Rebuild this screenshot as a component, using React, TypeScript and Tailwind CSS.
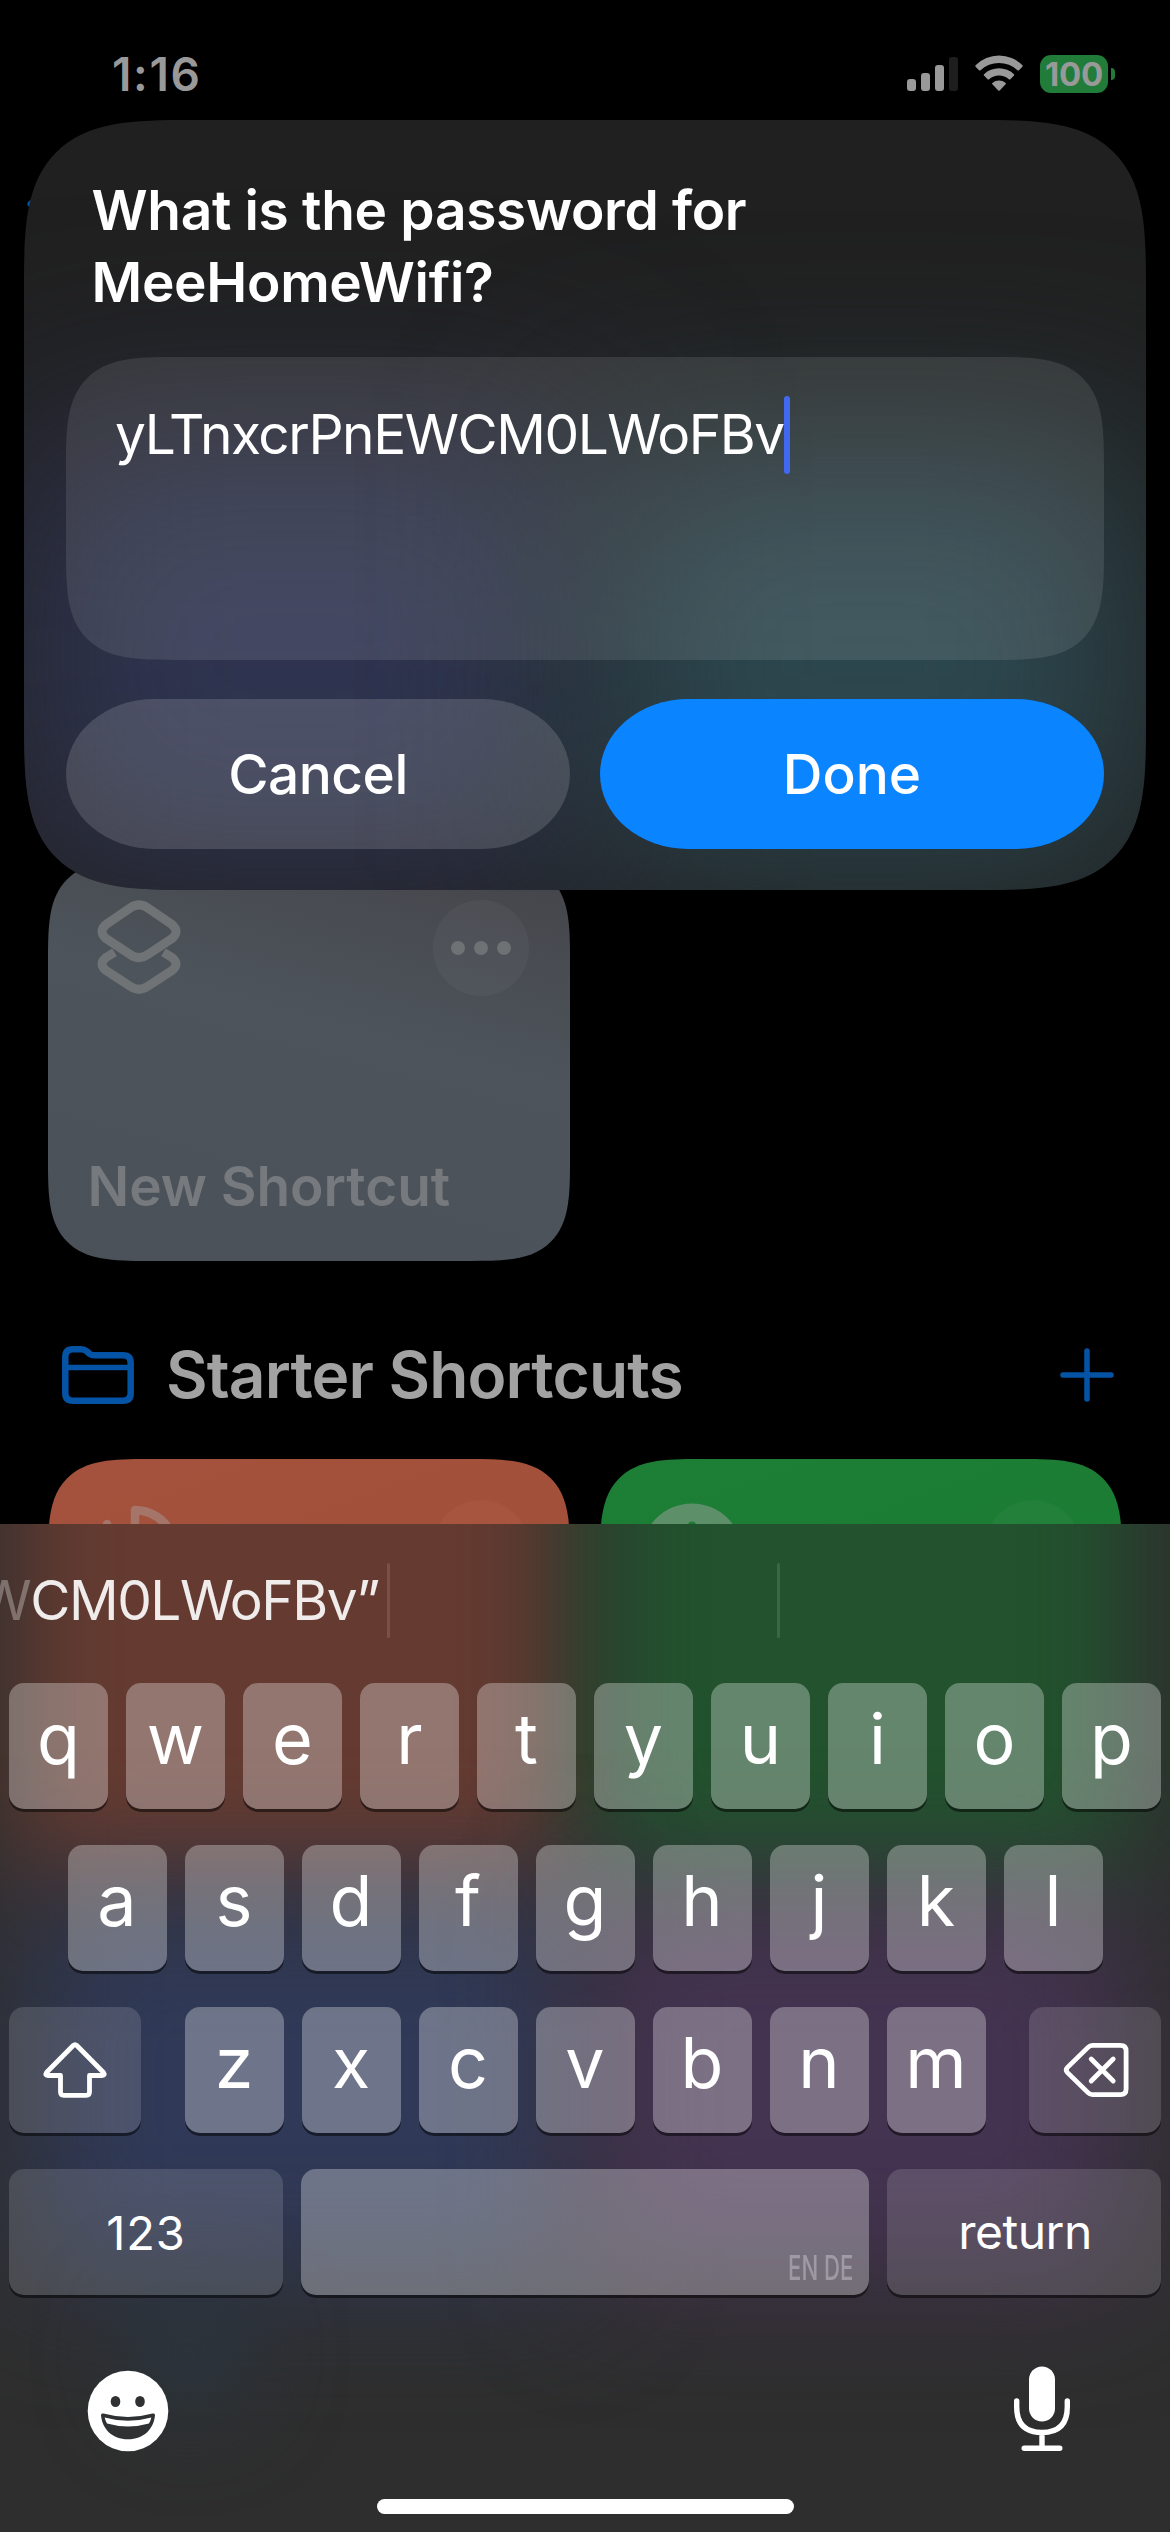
import type { ReactNode } from "react";

function SignalIcon() {
  return (
    <div className="flex h-[34px] items-end gap-[5px]">
      <div className="h-3 w-[9px] rounded-[3px] bg-[#999]" />
      <div className="h-[18px] w-[9px] rounded-[3px] bg-[#999]" />
      <div className="h-[26px] w-[9px] rounded-[3px] bg-[#999]" />
      <div className="h-[34px] w-[9px] rounded-[3px] bg-[#1e1e1e]" />
    </div>
  );
}

function WifiIcon() {
  return (
    <svg width="48" height="36" viewBox="0 0 48 36" fill="#999" className="-mt-0.5">
      <path d="M0.6 10.2A33 33 0 0 1 47.4 10.2Q48 11 47.4 11.7L44 15.2Q43.2 15.8 42.4 15.2A27 27 0 0 0 5.6 15.2Q4.8 15.8 4 15.2L0.6 11.7Q0 11 0.6 10.2Z" />
      <path d="M9 19.2A22 22 0 0 1 39 19.2Q39.7 19.9 39 20.6L35.4 24.2Q34.6 24.8 33.8 24.2A15 15 0 0 0 14.2 24.2Q13.4 24.8 12.6 24.2L9 20.6Q8.3 19.9 9 19.2Z" />
      <path d="M17.4 28A10 10 0 0 1 30.6 28Q31.3 28.6 30.6 29.3L24.7 35.5Q24 36.1 23.3 35.5L17.4 29.3Q16.7 28.6 17.4 28Z" />
    </svg>
  );
}

function StatusBar() {
  return (
    <div className="flex h-[148px] items-center pl-28 pr-[55px]">
      <span className="text-[46px] font-semibold leading-none tracking-[1.64px] text-[#999]">1:16</span>
      <div className="ml-auto flex items-center">
        <SignalIcon />
        <div className="ml-[17px]">
          <WifiIcon />
        </div>
        <div className="ml-[17px] flex h-[38px] w-[68px] items-center justify-center rounded-[11px] bg-[#207c38] text-[33px] font-bold leading-none tracking-[-0.24px] text-[#999]">
          100
        </div>
        <div className="ml-[3px] h-3 w-1 rounded-r-full bg-[#207c38]" />
      </div>
    </div>
  );
}

function ShortcutsIcon() {
  return (
    <svg width="84" height="96" viewBox="0 0 84 96" fill="none" stroke="#6f7376" strokeWidth="9" strokeLinejoin="round">
      <path d="M17.500 52.200L9 57.500Q1 64 9 70.500L33.500 86.400Q42 92.200 50.500 86.400L75 70.500Q83 64 75 57.500L66.500 52.200" />
      <path d="M33.500 7.800Q42 2 50.500 7.800L75 24.500Q83 31.500 75 38.500L50.500 54.700Q42 60.500 33.500 54.700L9 38.500Q1 31.500 9 24.500Z" />
    </svg>
  );
}

function MoreButton({ className, children }: { className: string; children?: ReactNode }) {
  return <div className={`flex size-24 items-center justify-center gap-[9px] rounded-full ${className}`}>{children}</div>;
}

function FolderIcon() {
  return (
    <svg width="72" height="58" viewBox="0 0 72 58" fill="none" stroke="#0453a5" strokeWidth="6.500" strokeLinejoin="round">
      <path d="M3.300 11Q3.300 3.300 11 3.300H19Q22.500 3.300 25 5.500L27.500 7.700Q29.500 9.300 32.500 9.300H61Q68.700 9.300 68.700 17V47Q68.700 54.700 61 54.700H11Q3.300 54.700 3.300 47Z" />
      <path d="M3.300 21.500H68.700" strokeWidth="5.500" />
    </svg>
  );
}

function Home() {
  return (
    <div className="flex h-full flex-col">
      <StatusBar />
      <div className="h-[712px] pl-[27px] pt-9">
        <svg width="26" height="40" viewBox="0 0 26 40" fill="none" stroke="#0453a5" strokeWidth="7" strokeLinecap="round" strokeLinejoin="round">
          <path d="M21 4L4 20L21 36" />
        </svg>
      </div>
      <div className="ml-12 flex h-[401px] w-[522px] flex-col justify-between rounded-[100px] bg-[linear-gradient(195deg,#46474d_8%,#4d545b_42%,#4a5158)] pb-[41px] pl-[39.5px] pr-[41px] pt-10 [corner-shape:superellipse(1.7)]">
        <div className="flex justify-between pl-[9px]">
          <ShortcutsIcon />
          <MoreButton className="bg-white/[0.035]">
            <div className="size-[14px] rounded-full bg-[#6e7274]" />
            <div className="size-[14px] rounded-full bg-[#6e7274]" />
            <div className="size-[14px] rounded-full bg-[#6e7274]" />
          </MoreButton>
        </div>
        <p className="text-[55px] font-semibold leading-[68px] tracking-[-0.05px] text-[#76797d]">New Shortcut</p>
      </div>
      <div className="flex h-[198px] items-center pl-[62px] pr-14 pt-[30px]">
        <FolderIcon />
        <h2 className="ml-8 text-[64px] font-semibold leading-none tracking-[-0.85px] text-[#a2a2a2]">Starter Shortcuts</h2>
        <svg className="ml-auto" width="54" height="54" viewBox="0 0 54 54" stroke="#0453a5" strokeWidth="5.500" strokeLinecap="round">
          <path d="M27 3V51M3 27H51" />
        </svg>
      </div>
      <div className="flex gap-[30px] px-12">
        <div className="flex h-[400px] w-[522px] items-start justify-between rounded-[100px] bg-[linear-gradient(160deg,#a4523d,#a14d37)] pl-[49px] pr-[41px] pt-[41px] [corner-shape:superellipse(1.7)]">
          <svg width="84" height="96" viewBox="0 0 84 96" fill="none" stroke="#a5756a" strokeWidth="8.500" strokeLinecap="round" strokeLinejoin="round" className="mt-[5px]">
            <path d="M38 44V5Q68 6 80 40" />
            <path d="M10 19L5 40" />
          </svg>
          <MoreButton className="bg-[#a85540]" />
        </div>
        <div className="flex h-[400px] w-[522px] items-start justify-between rounded-[100px] bg-[linear-gradient(160deg,#1d7e36,#1a7930)] pl-[41px] pr-[41px] pt-[41px] [corner-shape:superellipse(1.7)]">
          <svg width="102" height="102" viewBox="0 0 102 102" className="mt-[3px]">
            <circle cx="51" cy="51" r="50.500" fill="#5d9069" />
            <rect x="47" y="18.500" width="8" height="40" rx="4" fill="#1d7c35" />
          </svg>
          <MoreButton className="bg-[#23803a]" />
        </div>
      </div>
    </div>
  );
}

function PasswordDialog() {
  return (
    <div className="absolute left-6 top-[120px] h-[770px] w-[1122px] overflow-hidden rounded-[168px] bg-[#202020] [corner-shape:superellipse(1.7)]">
      <div className="absolute -left-[10px] top-[310px] h-[450px] w-[560px] bg-[#2f3450] blur-[100px]" />
      <div className="absolute left-[570px] top-[330px] h-[420px] w-[550px] bg-[#2d474f] blur-[100px]" />
      <div className="relative flex h-full flex-col px-[42px] pt-[54px]">
        <h1 className="pl-[25.5px] text-[55px] font-semibold leading-[72px] tracking-[-0.32px] text-white">
          What is the password for
          <br />
          MeeHomeWifi?
        </h1>
        <div className="mt-[39px] flex h-[303px] items-start rounded-[110px] bg-white/10 pl-[49px] pt-[39px] [corner-shape:superellipse(1.7)]">
          <span className="text-[55px] leading-[77px] tracking-[-1.46px] text-white">yLTnxcrPnEWCM0LWoFBv</span>
          <span className="h-[78px] w-1.5 rounded-full bg-[#4169f0]" />
        </div>
        <div className="mt-[39px] flex h-[150px] gap-[30px]">
          <button className="flex-1 rounded-[88px/75px] bg-white/[0.145] text-[55px] font-medium leading-none tracking-[-0.5px] text-white">Cancel</button>
          <button className="flex-1 rounded-[88px/75px] bg-[#0a84ff] text-[55px] font-medium leading-none text-white">Done</button>
        </div>
      </div>
    </div>
  );
}

function LetterKey({ children }: { children: string }) {
  return (
    <button className="flex h-[126px] w-[99px] items-center justify-center rounded-[15px] bg-white/30 pb-[15px] text-[70px] font-normal leading-none text-white shadow-[0_3px_0_rgba(0,0,0,0.5)]">
      {children}
    </button>
  );
}

function Letters({ keys }: { keys: string }) {
  return (
    <div className="flex gap-[18px]">
      {keys.split("").map((k) => (
        <LetterKey key={k}>{k}</LetterKey>
      ))}
    </div>
  );
}

const controlKey =
  "flex h-[126px] items-center justify-center rounded-[15px] bg-white/[0.135] leading-none text-white shadow-[0_3px_0_rgba(0,0,0,0.5)]";

function Keyboard() {
  return (
    <div className="absolute left-0 top-[1524px] h-[1008px] w-full overflow-hidden bg-[#2e2e2e]">
      <div className="absolute -top-[200px] left-[15px] h-[555px] w-[550px] bg-[#653b31] blur-[52px]" />
      <div className="absolute -top-[200px] left-[598px] h-[555px] w-[532px] bg-[#22522e] blur-[52px]" />
      <div className="absolute left-[30px] top-[375px] h-[380px] w-[550px] bg-[#303957] blur-[64px]" />
      <div className="absolute left-[590px] top-[375px] h-[380px] w-[535px] bg-[#443351] blur-[64px]" />
      <div className="absolute left-[130px] top-[770px] h-[120px] w-[120px] rounded-full bg-[#2a3640] blur-[45px]" />
      <div className="relative flex h-full flex-col">
        <div className="flex h-[153px] items-center">
          <div className="flex w-[387px] justify-end overflow-hidden pr-[8px] text-[55px] leading-none tracking-[-1.49px] text-[#efeceb]">
            <span className="text-white/30">W</span>
            <span>CM0LWoFBv”</span>
          </div>
          <div className="h-[75px] w-[3px] rounded-full bg-white/[0.12]" />
          <div className="w-[387px]" />
          <div className="h-[75px] w-[3px] rounded-full bg-white/[0.12]" />
        </div>
        <div className="flex flex-col items-center gap-9 pt-1.5">
          <Letters keys="qwertyuiop" />
          <Letters keys="asdfghjkl" />
          <div className="flex w-[1152px] justify-between">
            <button className={`w-[132px] ${controlKey}`}>
              <svg width="66" height="58" viewBox="0 0 66 58" fill="none" stroke="white" strokeWidth="4.800" strokeLinejoin="round">
                <path d="M31.200 4.500Q33 2.700 34.800 4.500L61.500 31.500Q63.500 34.500 60 34.500H47.500V51Q47.500 54.300 44.200 54.300H21.800Q18.500 54.300 18.500 51V34.500H6Q2.500 34.500 4.500 31.500Z" />
              </svg>
            </button>
            <Letters keys="zxcvbnm" />
            <button className={`w-[132px] ${controlKey}`}>
              <svg width="66" height="58" viewBox="0 0 66 58" fill="none" stroke="white" strokeWidth="4.800" strokeLinecap="round" strokeLinejoin="round" className="ml-px">
                <path d="M29.500 4.400H57.500Q63.100 4.400 63.100 10V48Q63.100 53.600 57.500 53.600H29.500Q27 53.600 25 51.600L4.500 31.600Q2 29 4.500 26.400L25 6.400Q27 4.400 29.500 4.400Z" />
                <path d="M28.200 18L50.200 40M50.200 18L28.200 40" />
              </svg>
            </button>
          </div>
          <div className="flex gap-[18px]">
            <button className={`w-[274px] text-[47px] tracking-[0.86px] ${controlKey}`}>123</button>
            <div className="flex h-[126px] w-[568px] items-end justify-end rounded-[15px] bg-white/30 pb-[10px] pr-[16px] shadow-[0_3px_0_rgba(0,0,0,0.5)]">
              <span className="origin-right scale-x-[0.65] text-[34px] font-medium leading-[34px] text-white/30">EN DE</span>
            </div>
            <button className={`w-[274px] pl-0.5 text-[48px] tracking-[-0.5px] ${controlKey}`}>return</button>
          </div>
        </div>
        <div className="flex items-center justify-between pl-[87px] pr-[99px] pt-[71px]">
          <svg width="82" height="82" viewBox="0 0 82 82" className="mt-1">
            <circle cx="41" cy="41" r="40.300" fill="white" />
            <ellipse cx="28.500" cy="31.500" rx="4.800" ry="5.600" fill="#2f3133" />
            <ellipse cx="53" cy="31.500" rx="4.800" ry="5.600" fill="#2f3133" />
            <path d="M14 45Q14 43 16.500 43.600Q41 50.500 65.500 43.600Q68 43 68 45C67 59 56.500 69.300 41 69.300C25.500 69.300 15 59 14 45Z" fill="#2f3133" />
            <path d="M17.700 47.500Q41 54 64.300 47.500Q64 50 62 53.500Q41 59.500 20 53.500Q18 50 17.700 47.500Z" fill="white" />
          </svg>
          <svg width="58" height="86" viewBox="0 0 58 86" fill="none" stroke="white" strokeWidth="5.400" strokeLinecap="round">
            <rect x="16" y="0.500" width="26" height="55" rx="13" fill="white" stroke="none" />
            <path d="M3.700 35V41Q3.700 66.500 29 66.500Q54.300 66.500 54.300 41V35M29 66.500V82.300M11.200 82.300H46.800" />
          </svg>
        </div>
        <div className="mx-auto mb-[18px] mt-auto h-[15px] w-[417px] rounded-full bg-white" />
      </div>
    </div>
  );
}

export default function App() {
  return (
    <div className="relative h-[2532px] w-[1170px] overflow-hidden bg-black font-['Inter',sans-serif]">
      <Home />
      <PasswordDialog />
      <Keyboard />
    </div>
  );
}
